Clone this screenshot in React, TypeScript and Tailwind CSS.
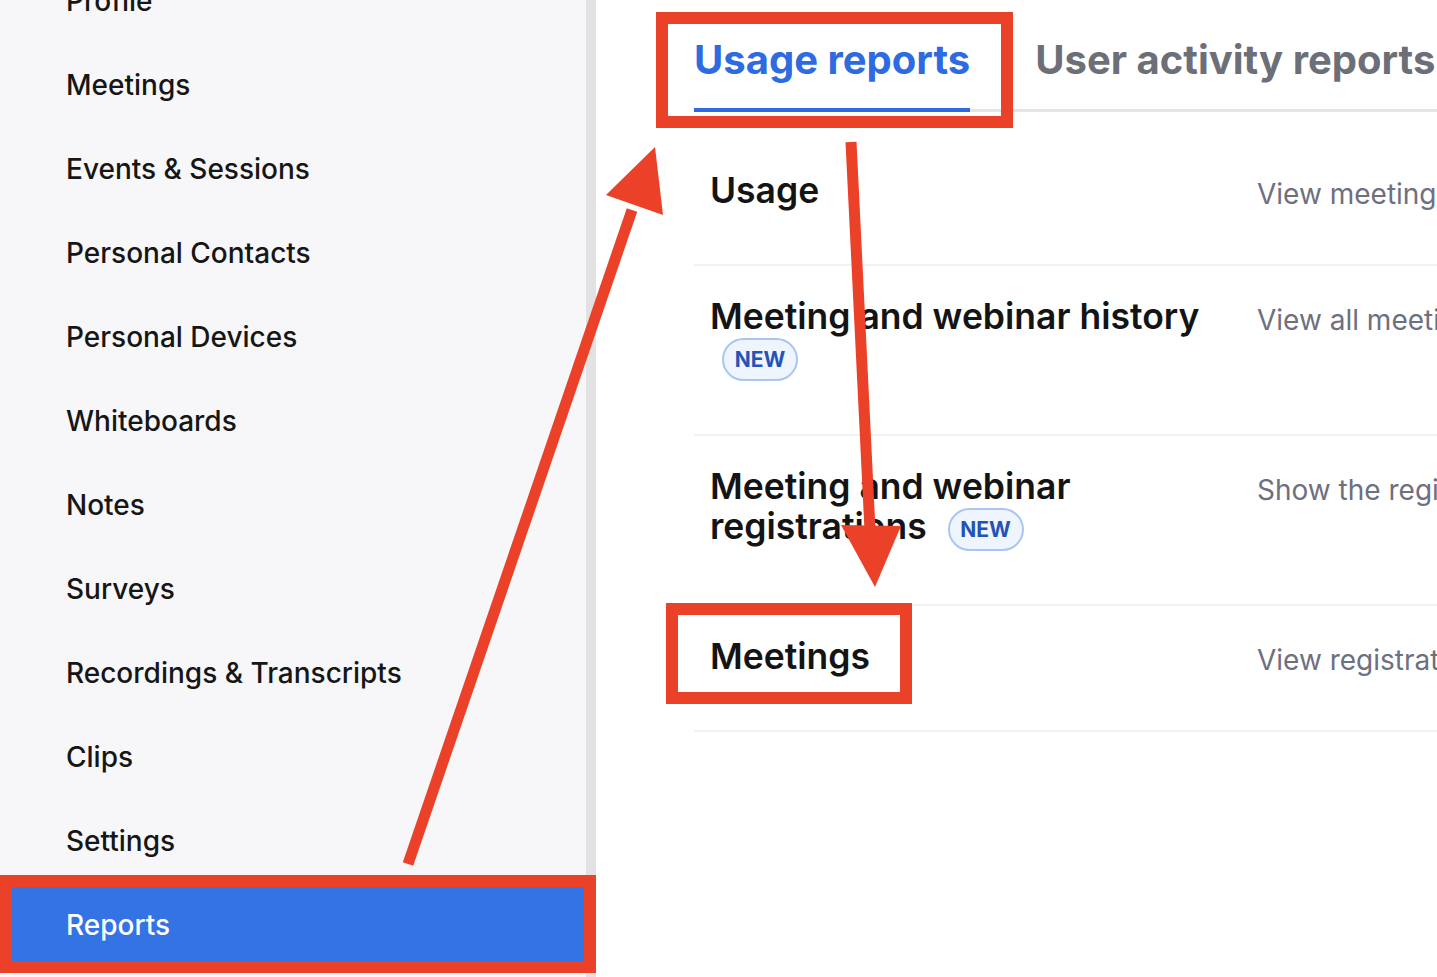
import React from "react";

const NAV = [
  "Profile",
  "Meetings",
  "Events & Sessions",
  "Personal Contacts",
  "Personal Devices",
  "Whiteboards",
  "Notes",
  "Surveys",
  "Recordings & Transcripts",
  "Clips",
  "Settings",
  "Reports",
];

type Row = { title: string; isNew?: boolean; desc: string };

const ROWS: Row[] = [
  { title: "Usage", desc: "View meeting usage, participants and minutes" },
  { title: "Meeting and webinar history", isNew: true, desc: "View all meetings and webinars hosted" },
  { title: "Meeting and webinar registrations", isNew: true, desc: "Show the registration report" },
  { title: "Meetings", desc: "View registration reports and polls" },
];

const font = { fontFamily: "Inter, 'Liberation Sans', sans-serif" };

function NewBadge() {
  return (
    <span className="my-[2px] ml-3 inline-flex h-[43px] w-[76px] items-center justify-center rounded-full border-2 border-[#a9c6f3] bg-[#eff5fe] align-middle text-[21px] font-bold text-[#2553b5]">
      NEW
    </span>
  );
}

function Sidebar() {
  return (
    <aside className="flex w-[586px] shrink-0 flex-col bg-[#f7f7f9]">
      <ul className="-mt-[41px]">
        {NAV.map((n) => {
          const active = n === "Reports";
          return (
            <li
              key={n}
              className={
                "flex h-[84px] items-center pl-[66px] text-[28px] font-medium " +
                (active ? "bg-[#3473e4] text-white" : "text-[#161616]")
              }
            >
              {n}
            </li>
          );
        })}
      </ul>
    </aside>
  );
}

function Main() {
  return (
    <main className="min-w-0 flex-1 overflow-hidden bg-white pl-[98px]">
      <div className="flex h-[112px] gap-[65px] whitespace-nowrap border-b-[3px] border-[#e3e5e9]">
        <div className="-mb-[3px] h-[112px] border-b-[4px] border-[#2f6be0] pt-[40px] text-[40px] font-bold leading-[40px] text-[#2f6be0]">
          Usage reports
        </div>
        <div className="pt-[40px] text-[40px] font-bold leading-[40px] text-[#6c6f78]">
          User activity reports
        </div>
      </div>
      <div className="mt-[28px]">
        {ROWS.map((r) => (
          <div key={r.title} className="flex border-b-2 border-[#f1f2f6] pb-[51px] pl-4 pt-[32px]">
            <div className="w-[531px] shrink-0 text-[35.5px] font-semibold leading-[38px] text-[#141414]">
              {r.title}
              {r.isNew && (
                <>
                  {" "}
                  <NewBadge />
                </>
              )}
            </div>
            <div className="ml-4 mt-[3px] whitespace-nowrap text-[28px] leading-[38px] text-[#6e6f80]">
              {r.desc}
            </div>
          </div>
        ))}
      </div>
    </main>
  );
}

function Annotations() {
  const red = "#ea4128";
  return (
    <div className="pointer-events-none absolute inset-0">
      <div className="absolute left-[656px] top-[12px] h-[116px] w-[357px] border-[12px] border-[#ea4128]" />
      <div className="absolute left-[666px] top-[603px] h-[101px] w-[246px] border-[12px] border-[#ea4128]" />
      <div className="absolute left-0 top-[875px] h-[98px] w-[596px] border-[12px] border-[#ea4128]" />
      <svg className="absolute inset-0" width="1437" height="977" viewBox="0 0 1437 977">
        <line x1="408" y1="864" x2="632" y2="210" stroke={red} strokeWidth="11" />
        <polygon points="606,195 655,147 663,215" fill={red} />
        <line x1="851" y1="142" x2="870" y2="530" stroke={red} strokeWidth="11" />
        <polygon points="841,525 901,526 875,587" fill={red} />
      </svg>
    </div>
  );
}

export default function App() {
  return (
    <div className="relative flex h-[977px] w-full overflow-hidden bg-white" style={font}>
      <Sidebar />
      <div className="w-[10px] shrink-0 bg-[#e2e2e2]" />
      <Main />
      <Annotations />
    </div>
  );
}
